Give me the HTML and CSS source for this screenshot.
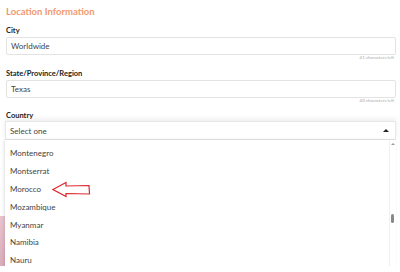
FILE: index.html
```html
<!DOCTYPE html>
<html lang="en">
<head>
    <meta charset="UTF-8">
    <title>Location Information</title>
    <link rel="stylesheet" href="styles.css">
</head>
<body>
    <div class="form">
        <h2 class="section-title">Location Information</h2>

        <div class="field">
            <label>City</label>
            <div class="input">Worldwide</div>
            <div class="count">41 characters left</div>
        </div>

        <div class="field">
            <label>State/Province/Region</label>
            <div class="input">Texas</div>
            <div class="count">40 characters left</div>
        </div>

        <div class="field country">
            <label>Country</label>
            <div class="select-wrap">
                <div class="select">
                    <span>Select one</span>
                    <span class="caret"></span>
                </div>
                <div class="dropdown">
                    <ul class="options">
                        <li>Montenegro</li>
                        <li>Montserrat</li>
                        <li class="marked">Morocco
                            <svg class="arrow" width="40" height="17" viewBox="0 0 40 17">
                                <path d="M1 8.5 L14 1.5 L14 5 L37 4.5 L37.5 13 L14 12.5 L14 15.5 Z" fill="none" stroke="#e0252f" stroke-width="1.2" stroke-linejoin="miter"/>
                            </svg>
                        </li>
                        <li>Mozambique</li>
                        <li>Myanmar</li>
                        <li>Namibia</li>
                        <li>Nauru</li>
                    </ul>
                    <div class="scrollbar">
                        <span class="up"></span>
                        <span class="thumb"></span>
                    </div>
                </div>
            </div>
            <div class="photo"></div>
        </div>
    </div>
</body>
</html>
```

FILE: styles.css
```css
body {
    margin: 0;
    font-family: Lato, "Open Sans", sans-serif;
    background-color: #fff;
    color: #333;
    overflow: hidden;
}

.form {
    padding: 0 4px 0 6px;
}

.section-title {
    margin: 0;
    padding-top: 4px;
    font-size: 9.5px;
    font-weight: bold;
    color: #ef9a6e;
    line-height: 15px;
}

.field {
    margin-top: 7px;
}

.field label {
    display: block;
    font-size: 7.5px;
    font-weight: bold;
    color: #222;
    line-height: 10px;
}

.input {
    margin-top: 1px;
    height: 16px;
    border: 1px solid #e3e3e3;
    border-radius: 2px;
    padding: 0 4px;
    font-size: 8px;
    line-height: 16px;
    color: #444;
}

.count {
    text-align: right;
    font-size: 4.5px;
    color: #aaa;
    line-height: 6px;
    padding-right: 2px;
}

.field + .field {
    margin-top: 8px;
}

.field.country {
    margin-top: 7px;
}

.select-wrap {
    position: relative;
}

.select {
    display: flex;
    justify-content: space-between;
    align-items: center;
    height: 17px;
    padding: 0 6px 0 4px;
    margin-left: -1px;
    border: 1px solid #e8e8e8;
    box-shadow: 0 -2px 5px rgba(0, 0, 0, 0.08);
    font-size: 8px;
    color: #444;
}

.caret {
    width: 0;
    height: 0;
    border-left: 3px solid transparent;
    border-right: 3px solid transparent;
    border-bottom: 3px solid #222;
}

.dropdown {
    position: absolute;
    top: 19px;
    left: -1px;
    right: 0;
    height: 140px;
    background-color: #fff;
    box-shadow: -1px 0 3px rgba(0, 0, 0, 0.12);
    z-index: 2;
    display: flex;
}

.options {
    list-style: none;
    margin: 0;
    padding: 5px 0 0 5px;
    flex: 1;
}

.options li {
    height: 17.9px;
    line-height: 17.9px;
    font-size: 8px;
    color: #444;
    position: relative;
}

.arrow {
    position: absolute;
    left: 42px;
    top: 0;
}

.scrollbar {
    width: 6px;
    border-left: 1px solid #f0f0f0;
    position: relative;
}

.scrollbar .up {
    position: absolute;
    top: 3px;
    left: 1px;
    width: 0;
    height: 0;
    border-left: 2px solid transparent;
    border-right: 2px solid transparent;
    border-bottom: 2px solid #999;
}

.scrollbar .thumb {
    position: absolute;
    top: 74px;
    left: 1px;
    width: 3px;
    height: 9px;
    border-radius: 2px;
    background-color: #888;
}

.photo {
    margin: 76px 0 0 -6px;
    width: 120px;
    height: 50px;
    background: linear-gradient(160deg, #e9c4cf, #d9a9b8 60%, #cfa0b0);
}
```
